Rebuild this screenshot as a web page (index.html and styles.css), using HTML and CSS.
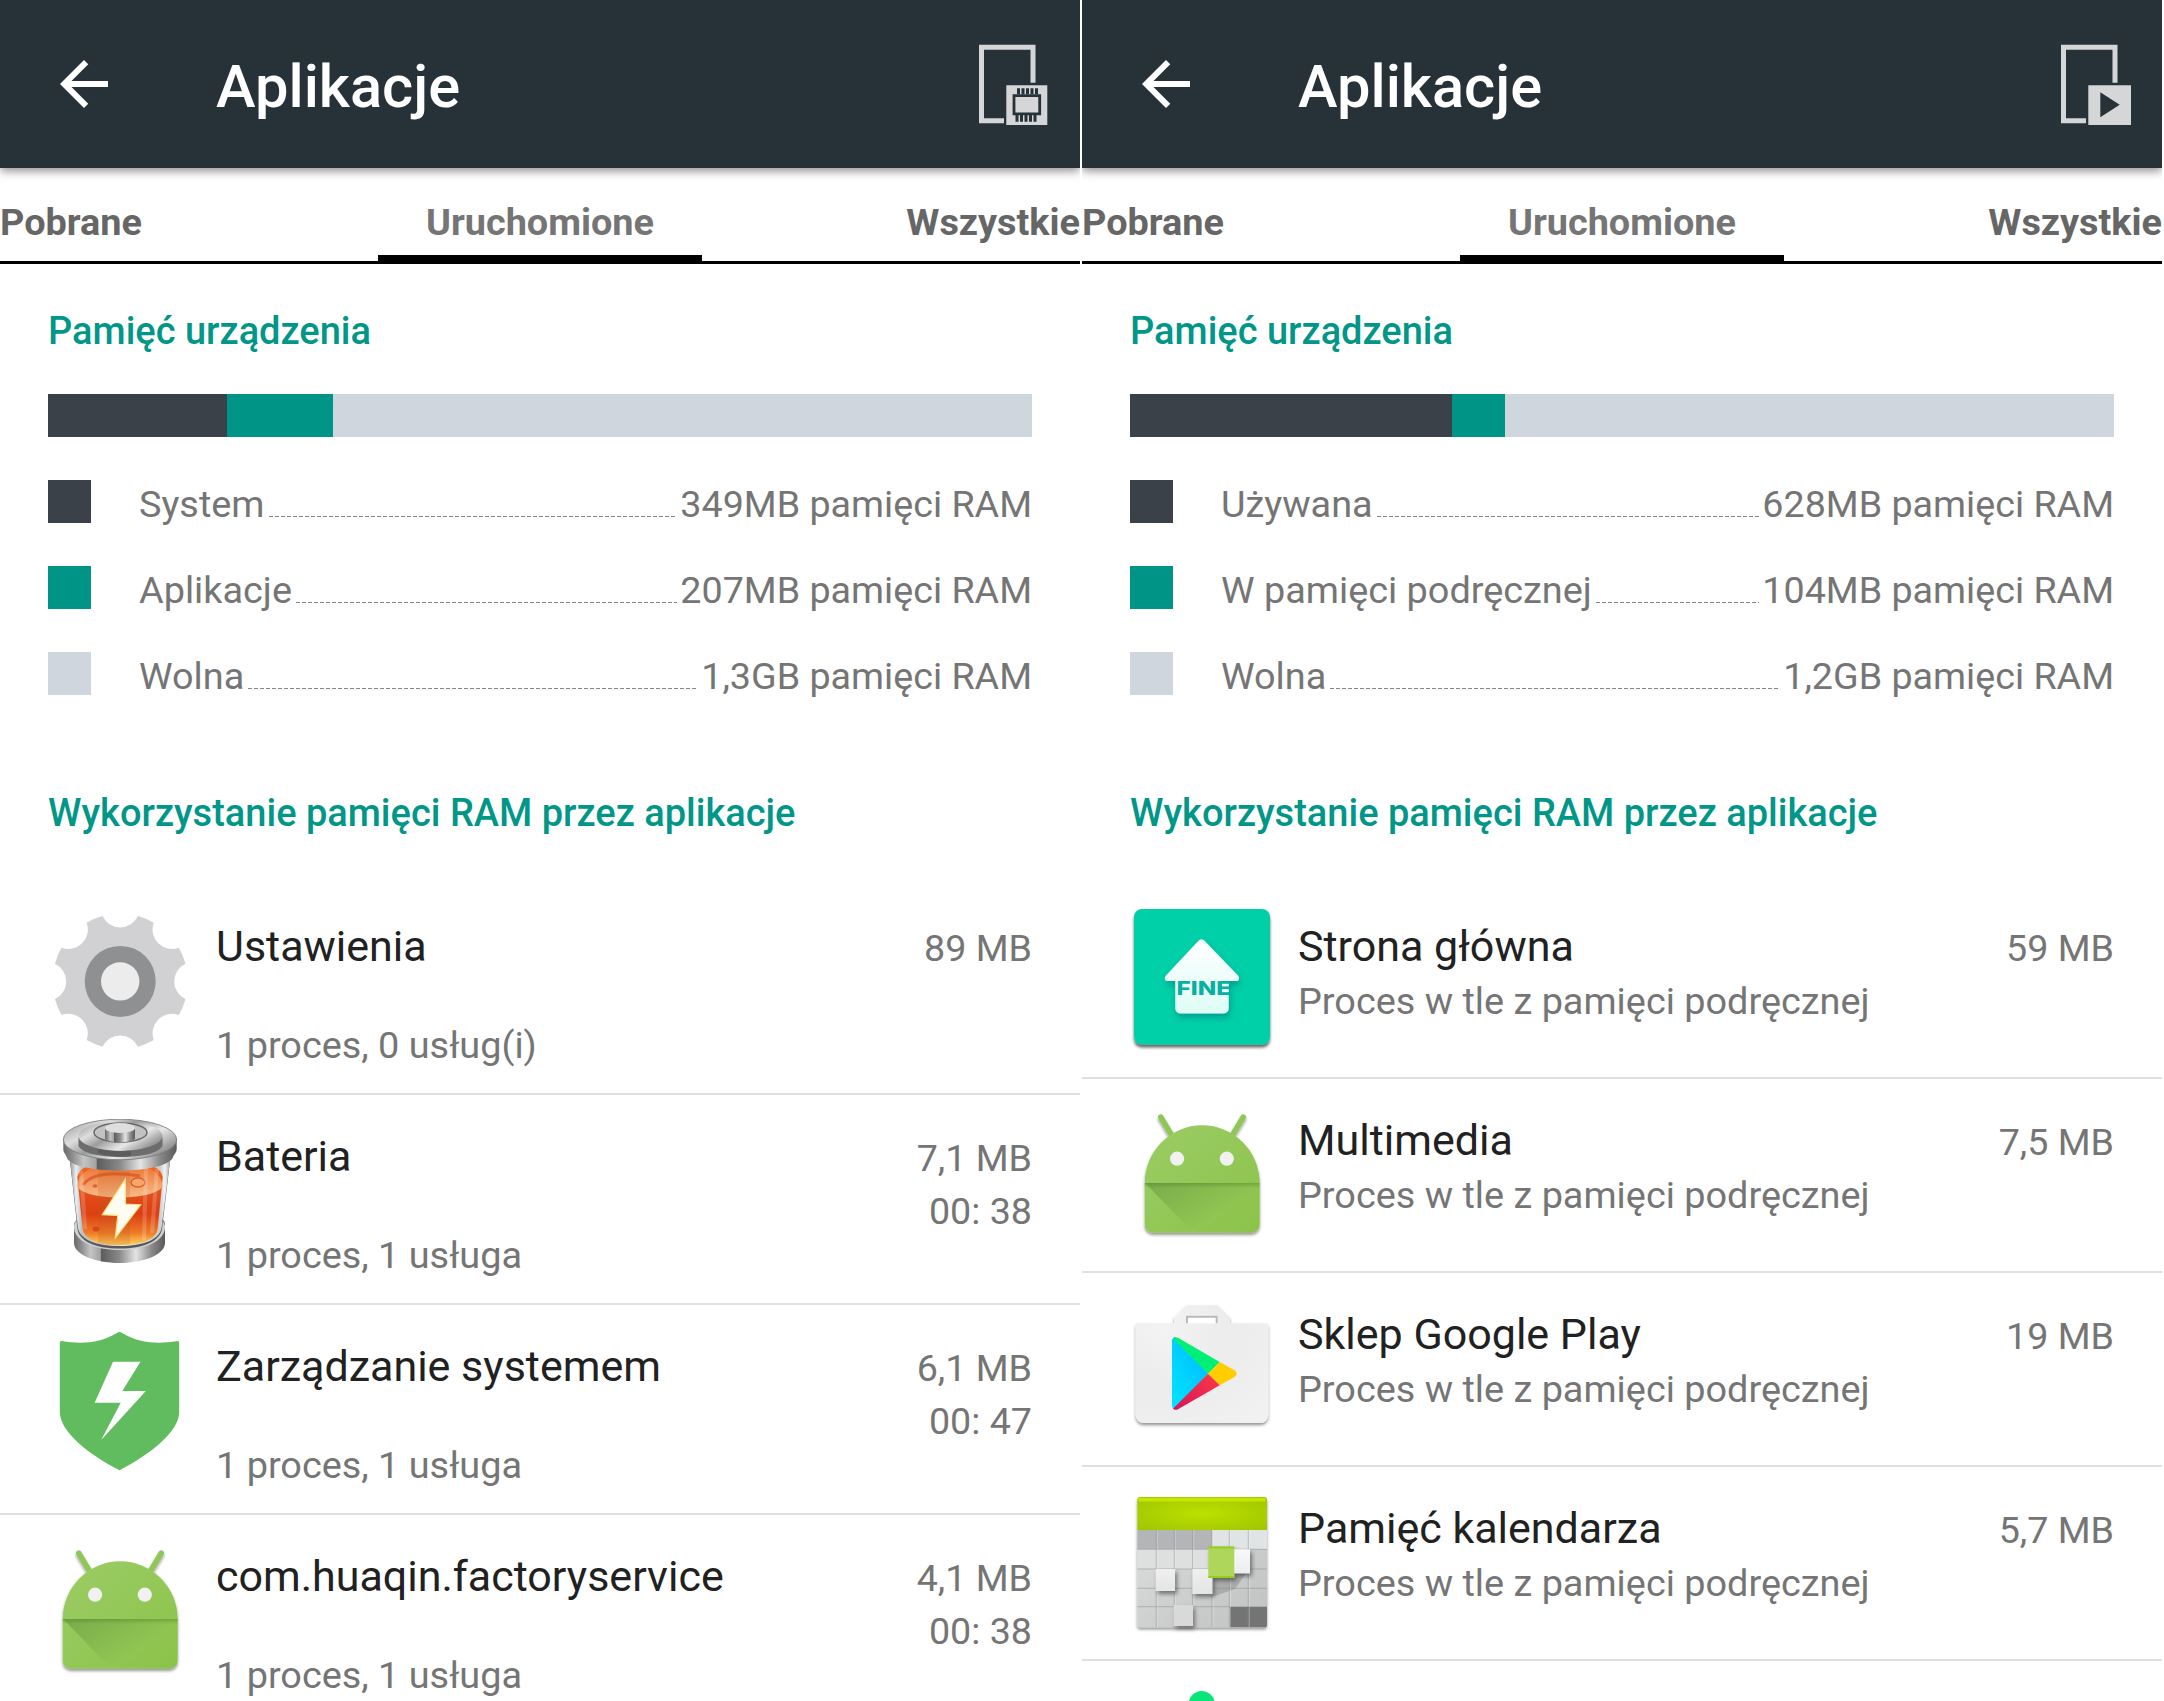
FILE: index.html
```html
<!DOCTYPE html>
<html lang="pl">
<head>
<meta charset="utf-8">
<title>Aplikacje</title>
<link rel="stylesheet" href="styles.css">
</head>
<body>
<svg class="defs" width="0" height="0" aria-hidden="true">
  <defs>
    <linearGradient id="metal" x1="0" x2="1" y1="0" y2="0">
      <stop offset="0" stop-color="#6a6a6a"/><stop offset=".08" stop-color="#8d8d8d"/><stop offset=".18" stop-color="#c4c4c4"/><stop offset=".29" stop-color="#a2a2a2"/>
      <stop offset=".3" stop-color="#5c5c5c"/><stop offset=".5" stop-color="#8a8a8a"/><stop offset=".68" stop-color="#e4e4e4"/><stop offset=".85" stop-color="#8a8a8a"/><stop offset="1" stop-color="#5a5a5a"/>
    </linearGradient>
    <linearGradient id="lid" x1="0" x2="1" y1="0" y2=".6">
      <stop offset="0" stop-color="#8e8e8e"/><stop offset=".3" stop-color="#dedede"/><stop offset=".5" stop-color="#9c9c9c"/><stop offset=".75" stop-color="#e8e8e8"/><stop offset="1" stop-color="#949494"/>
    </linearGradient>
    <linearGradient id="glass" x1="0" x2="1" y1="0" y2="0">
      <stop offset="0" stop-color="#8f9499"/><stop offset=".06" stop-color="#eceff1"/><stop offset=".12" stop-color="#b9bec1"/><stop offset=".5" stop-color="#e8e8e8"/><stop offset=".9" stop-color="#c9cdd0"/><stop offset=".95" stop-color="#f3f4f5"/><stop offset="1" stop-color="#9fa3a6"/>
    </linearGradient>
    <linearGradient id="liquid" x1="0" x2="0" y1="0" y2="1">
      <stop offset="0" stop-color="#f26a1c"/><stop offset=".35" stop-color="#e4501c"/><stop offset=".62" stop-color="#dc3f12"/><stop offset=".85" stop-color="#ee7a26"/><stop offset="1" stop-color="#ffd25c"/>
    </linearGradient>
    <linearGradient id="surface" x1="0" x2="0" y1="0" y2="1">
      <stop offset="0" stop-color="#ee6c2c"/><stop offset="1" stop-color="#f9bd88"/>
    </linearGradient>
    <linearGradient id="droid" x1="0" x2="1" y1="0" y2="1">
      <stop offset="0" stop-color="#9ccc65"/><stop offset="1" stop-color="#8bc34a"/>
    </linearGradient>
    <linearGradient id="fold" x1=".05" x2=".7" y1=".1" y2=".55">
      <stop offset="0" stop-color="#33691e" stop-opacity=".28"/><stop offset="1" stop-color="#33691e" stop-opacity="0"/>
    </linearGradient>
    <linearGradient id="seam" x1="0" x2="0" y1="0" y2="1">
      <stop offset="0" stop-color="#33691e" stop-opacity=".3"/><stop offset="1" stop-color="#33691e" stop-opacity="0"/>
    </linearGradient>
    <linearGradient id="house" x1="0" x2="0" y1="0" y2="1">
      <stop offset="0" stop-color="#ffffff"/><stop offset="1" stop-color="#defdf6"/>
    </linearGradient>
    <linearGradient id="playblue" x1="1" x2="0" y1="0" y2="1">
      <stop offset="0" stop-color="#00b8ff"/><stop offset="1" stop-color="#00e5ff"/>
    </linearGradient>
    <linearGradient id="playred" x1="1" x2="0" y1="0" y2="1">
      <stop offset="0" stop-color="#ff3a44"/><stop offset="1" stop-color="#d4145a"/>
    </linearGradient>
    <radialGradient id="bag" cx=".2" cy=".2" r="1">
      <stop offset="0" stop-color="#f3f3f3"/><stop offset=".5" stop-color="#ececec"/><stop offset="1" stop-color="#f1f1f1"/>
    </radialGradient>
    <radialGradient id="calhead" cx=".5" cy=".5" r=".7">
      <stop offset="0" stop-color="#bbe000"/><stop offset="1" stop-color="#a0c500"/>
    </radialGradient>
    <linearGradient id="calgrid" x1="0" x2="1" y1="0" y2="1">
      <stop offset="0" stop-color="#e2e2e2"/><stop offset=".5" stop-color="#cfd1d1"/><stop offset="1" stop-color="#bfc2c1"/>
    </linearGradient>
    <linearGradient id="calblock" x1="0" x2="0" y1="0" y2="1">
      <stop offset="0" stop-color="#f8f8f8"/><stop offset="1" stop-color="#e4e4e4"/>
    </linearGradient>
    <filter id="drop" x="-20%" y="-20%" width="140%" height="150%"><feDropShadow dx="0" dy="2.2" stdDeviation="1.5" flood-color="#000" flood-opacity=".42"/></filter>
    <filter id="tiledrop" x="-20%" y="-20%" width="140%" height="150%"><feDropShadow dx="0" dy="3" stdDeviation="1.8" flood-color="#000" flood-opacity=".6"/></filter>
    <filter id="softdrop" x="-20%" y="-20%" width="150%" height="150%"><feDropShadow dx="1.5" dy="4" stdDeviation="3.5" flood-color="#006b78" flood-opacity=".5"/></filter>
    <filter id="blockdrop" x="-30%" y="-30%" width="180%" height="190%"><feDropShadow dx="2" dy="3" stdDeviation="2.2" flood-color="#000" flood-opacity=".45"/></filter>
    <symbol id="android" viewBox="0 0 144 144">
      <g filter="url(#drop)">
        <path d="M30.7 14 42.5 33.5M113.3 14 101.5 33.5" stroke="#8fc657" stroke-width="5.4" stroke-linecap="round"/>
        <path d="M14.7 80a57.5 57.7 0 0 1 115 0v41.700a8 8 0 0 1-8 8h-99a8 8 0 0 1-8-8z" fill="url(#droid)"/>
      </g>
      <path d="M15 80h114.500v41.700a8 8 0 0 1-8 8H63.500z" fill="url(#fold)"/>
      <path d="M14.700 80h115v5h-115z" fill="url(#seam)"/>
      <circle cx="47.100" cy="55.700" r="7.100" fill="#f1f1f1"/><circle cx="96.800" cy="55.700" r="7.100" fill="#f1f1f1"/>
    </symbol>
    <symbol id="back" viewBox="0 0 24 24"><path fill="#fff" d="M20 11H7.830l5.590-5.590L12 4l-8 8 8 8 1.410-1.410L7.830 13H20z"/></symbol>
  </defs>
</svg>

<div class="screens">
  <section class="screen">
    <header class="toolbar">
      <svg class="back"><use href="#back"/></svg>
      <h1 class="title">Aplikacje</h1>
      <svg class="action" viewBox="0 0 84 96">
        <path d="M32 84.800H9.500V11.200H61v35.500" fill="none" stroke="#d4d6d8" stroke-width="5"/>
        <path d="M34.300 49.300h41v39.700h-41z" fill="#d4d6d8"/>
        <path d="M42 59.700h25.700v18.200H42z" fill="none" stroke="#273238" stroke-width="2.800"/>
        <path d="M46.500 52.300v6M51 52.300v6M55.500 52.300v6M60 52.300v6M64.500 52.300v6M45 79v6.700M49.500 79v6.700M54 79v6.700M58.500 79v6.700M63 79v6.700" stroke="#273238" stroke-width="3"/>
      </svg>
    </header>
    <nav class="tabs">
      <span class="tab">Pobrane</span>
      <span class="tab tab-active">Uruchomione</span>
      <span class="tab">Wszystkie</span>
    </nav>
    <div class="memory">
      <h2 class="heading">Pamięć urządzenia</h2>
      <div class="bar"><i class="dark" style="width:179px"></i><i class="teal" style="width:106px"></i></div>
      <div class="legend">
        <div class="entry"><i class="swatch dark"></i><span>System</span><i class="leader"></i><span class="amount">349MB pamięci RAM</span></div>
        <div class="entry"><i class="swatch teal"></i><span>Aplikacje</span><i class="leader"></i><span class="amount">207MB pamięci RAM</span></div>
        <div class="entry"><i class="swatch pale"></i><span>Wolna</span><i class="leader"></i><span class="amount">1,3GB pamięci RAM</span></div>
      </div>
      <h2 class="heading">Wykorzystanie pamięci RAM przez aplikacje</h2>
    </div>
    <ul class="apps apps-running">
      <li class="app">
        <svg class="icon" viewBox="0 0 144 144">
          <g transform="translate(72.200 72.400)">
            <path fill="#d1d1d3" d="M65.300-17.700A19.500 19.500 0 0 0 65.300 17.700A67.600 67.600 0 0 1 58.700 33.600A19.500 19.500 0 0 0 33.600 58.700A67.600 67.600 0 0 1 17.700 65.300A19.500 19.500 0 0 0-17.700 65.300A67.600 67.600 0 0 1-33.600 58.700A19.500 19.500 0 0 0-58.700 33.600A67.600 67.600 0 0 1-65.300 17.700A19.500 19.500 0 0 0-65.300-17.700A67.600 67.600 0 0 1-58.700-33.600A19.500 19.500 0 0 0-33.600-58.700A67.600 67.600 0 0 1-17.700-65.300A19.500 19.500 0 0 0 17.700-65.300A67.600 67.600 0 0 1 33.600-58.700A19.500 19.500 0 0 0 58.700-33.600A67.600 67.600 0 0 1 65.300-17.700z"/>
            <circle r="35.500" fill="#8f9092"/><circle r="19.200" fill="#ececec"/>
          </g>
        </svg>
        <div class="text"><b class="name">Ustawienia</b><span class="detail">1 proces, 0 usług(i)</span></div>
        <div class="usage"><span>89 MB</span></div>
      </li>
      <li class="app">
        <svg class="icon" viewBox="0 0 144 144">
          <path d="M26 106c0-4 4-6 6-6h80c3 0 5 2 5 6v18c0 11-20 20-45.500 20S26 135 26 124z" fill="url(#metal)"/>
          <path d="M26 108c0 14 20 23 45.500 23s45.500-9 45.500-23c0-5-4-9-8-9H34c-4 0-8 4-8 9z" fill="#d0d0d0"/>
          <path d="M22 42h100l-8 68c-2 12-18 19.500-42.500 19.500S31 122 29.500 110z" fill="#56585a"/>
          <path d="M22 42h100l-8.500 67c-2 11-17 18-42 18S32 120 30 109z" fill="url(#glass)"/>
          <path d="M29.300 58c3-12 16-14 42.700-14s40 2 42.700 14l-5 52c-2 10-15 16-38 16s-35-6-37-16z" fill="url(#liquid)"/>
          <path d="M29.300 68c10 14 74 14 85.200 0 0-14-15-24-42.500-24S29 54 29.300 68z" fill="url(#surface)"/>
          <path d="M35 66C42 56 60 52 92 57" fill="none" stroke="#d9521c" stroke-width="3" opacity=".7"/>
          <ellipse cx="90" cy="63.500" rx="7" ry="4.500" fill="#f7a66b" stroke="#d4622c" stroke-width="1.500"/>
          <ellipse cx="47" cy="67" rx="2.500" ry="1.800" fill="#d9662f"/><ellipse cx="48" cy="110" rx="3.500" ry="2.500" fill="#d9481c"/>
          <path d="M50 48v76c10 3 22 3 32 1V46z" fill="#b75a1c" opacity=".2"/>
          <path d="M33 52l4 58M98 47l-2 74M109 50l-5 64" stroke="#fff" stroke-width="4" opacity=".18"/>
          <path d="M15.300 20h113.400v10c0 4-3 5-4 9C120 47 98 51.500 72 51.500S22 47 19 39c-1-4-3.700-5-3.700-9z" fill="url(#metal)"/>
          <ellipse cx="72" cy="20.500" rx="56.700" ry="20.300" fill="url(#lid)" stroke="#777" stroke-width=".8"/>
          <path d="M30.500 18v9c4 7 20 11 42 11s38-4 42-11v-9z" fill="#6d6d6d"/>
          <path d="M50 34c12 4 24 4 33 3V22H50z" fill="#505050" opacity=".55"/>
          <ellipse cx="72.500" cy="17" rx="42" ry="15" fill="url(#lid)"/>
          <ellipse cx="72.500" cy="13.500" rx="26.500" ry="9.500" fill="#c2c2c2" stroke="#6a6a6a" stroke-width="1.500"/>
          <path d="M57 9.500v10c3 5 27 5 30 0v-10z" fill="url(#metal)"/>
          <ellipse cx="72" cy="9" rx="15" ry="5" fill="#dedede"/>
          <path d="M77.300 60 54.300 95.700l15.500.8-2.500 22.500 25.400-33.300L77.500 85z" fill="#fffdf2" stroke="#ffe27a" stroke-width="1.200"/>
        </svg>
        <div class="text"><b class="name">Bateria</b><span class="detail">1 proces, 1 usługa</span></div>
        <div class="usage"><span>7,1 MB</span><span>00: 38</span></div>
      </li>
      <li class="app">
        <svg class="icon" viewBox="0 0 144 144">
          <path fill="#60bc5f" d="M71.500 3.100q-1.200 0-3 1.200C52 14 34 15.500 13.500 12q-1.700 0-1.700 1.700V83c0 20 30 43 59.700 58.200C101 126 131.200 103 131.200 83V13.700q0-1.700-1.700-1.700C109 15.500 91 14 74.500 4.300q-1.800-1.200-3-1.200z"/>
          <path fill="#fff" d="M65 32.800h27.500L74.300 62h23.500l-44.600 49 19.500-37.200h-26z"/>
        </svg>
        <div class="text"><b class="name">Zarządzanie systemem</b><span class="detail">1 proces, 1 usługa</span></div>
        <div class="usage"><span>6,1 MB</span><span>00: 47</span></div>
      </li>
      <li class="app">
        <svg class="icon"><use href="#android"/></svg>
        <div class="text"><b class="name">com.huaqin.factoryservice</b><span class="detail">1 proces, 1 usługa</span></div>
        <div class="usage"><span>4,1 MB</span><span>00: 38</span></div>
      </li>
    </ul>
  </section>

  <section class="screen">
    <header class="toolbar">
      <svg class="back"><use href="#back"/></svg>
      <h1 class="title">Aplikacje</h1>
      <svg class="action" viewBox="0 0 84 96">
        <path d="M32 84.800H9.500V11.200H61v35.500" fill="none" stroke="#d4d6d8" stroke-width="5"/>
        <path d="M34.300 49.200H77v39.800H34.300z" fill="#d4d6d8"/>
        <path d="M46.300 56.300v25l19.400-12.500z" fill="#273238"/>
      </svg>
    </header>
    <nav class="tabs">
      <span class="tab">Pobrane</span>
      <span class="tab tab-active">Uruchomione</span>
      <span class="tab">Wszystkie</span>
    </nav>
    <div class="memory">
      <h2 class="heading">Pamięć urządzenia</h2>
      <div class="bar"><i class="dark" style="width:322px"></i><i class="teal" style="width:53px"></i></div>
      <div class="legend">
        <div class="entry"><i class="swatch dark"></i><span>Używana</span><i class="leader"></i><span class="amount">628MB pamięci RAM</span></div>
        <div class="entry"><i class="swatch teal"></i><span>W pamięci podręcznej</span><i class="leader"></i><span class="amount">104MB pamięci RAM</span></div>
        <div class="entry"><i class="swatch pale"></i><span>Wolna</span><i class="leader"></i><span class="amount">1,2GB pamięci RAM</span></div>
      </div>
      <h2 class="heading">Wykorzystanie pamięci RAM przez aplikacje</h2>
    </div>
    <ul class="apps apps-cached">
      <li class="app">
        <svg class="icon" viewBox="0 0 144 144">
          <rect x="4" y="0" width="136" height="135.500" rx="8" fill="#00d0a8" filter="url(#tiledrop)"/>
          <g filter="url(#softdrop)" fill="url(#house)">
            <path d="M68.500 31.800q3-3 6 0L108.500 67q2 5-2.500 5h-7.300v27.500a5 5 0 0 1-5 5H50.300a5 5 0 0 1-5-5V72H38q-5 0-2.500-5z"/>
          </g>
          <text class="fine" x="46.500" y="85.700" textLength="54.500" lengthAdjust="spacingAndGlyphs">FINE</text>
        </svg>
        <div class="text"><b class="name">Strona główna</b><span class="detail">Proces w tle z pamięci podręcznej</span></div>
        <div class="usage"><span>59 MB</span></div>
      </li>
      <li class="app">
        <svg class="icon"><use href="#android"/></svg>
        <div class="text"><b class="name">Multimedia</b><span class="detail">Proces w tle z pamięci podręcznej</span></div>
        <div class="usage"><span>7,5 MB</span></div>
      </li>
      <li class="app">
        <svg class="icon" viewBox="0 0 144 144">
          <g filter="url(#drop)" fill="url(#bag)">
            <path d="M7.700 26.300H44V20.500L56.700 8.300h30.600L100 20.500v5.800h36.300q2 0 2 2V118a8 8 0 0 1-8 8H13.700a8 8 0 0 1-8-8V28.300q0-2 2-2z"/>
          </g>
          <path d="M56 26.300v-6.600q0-1 1-1h29.700q1 0 1 1v6.600z" fill="#fff"/>
          <path d="M57 26.300v-6.600h29.700v6.600" fill="none" stroke="#b9b9b9" stroke-width="2"/>
          <path d="M42 43.500q.5-3.500 3.500-3.500L78 76.700 45.500 112.500q-3-.5-3.500-3.500z" fill="url(#playblue)"/>
          <path d="M43 41.200q2-1.700 5-.4L89.700 65 78 76.700z" fill="#00f076"/>
          <path d="M89.700 65 104.500 73.300q4.500 3.400 0 6.800L89.700 88.300 78 76.700z" fill="#ffcd00"/>
          <path d="M78 76.700 89.700 88.300 48 112.200q-3 1.200-5-.4z" fill="url(#playred)"/>
        </svg>
        <div class="text"><b class="name">Sklep Google Play</b><span class="detail">Proces w tle z pamięci podręcznej</span></div>
        <div class="usage"><span>19 MB</span></div>
      </li>
      <li class="app">
        <svg class="icon" viewBox="0 0 144 144">
          <rect x="7.300" y="6" width="129.700" height="130.300" rx="3" fill="url(#calgrid)" filter="url(#drop)"/>
          <path d="M7.300 39H82v19.300H7.300z" fill="#b4b5b6"/><path d="M82 39h55v19.300H82z" fill="#e0e4e5"/>
          <path d="M7.300 58.300H82V78H7.300z" fill="#dedfdf"/>
          <path d="M7.300 39V9q0-3 3-3H134q3 0 3 3v30z" fill="url(#calhead)"/>
          <path d="M8.500 7h127v3.500h-127z" fill="#c3e800"/>
          <path d="M100 116h37v18q0 2.300-2 2.300h-35z" fill="#737473"/>
          <path d="M82 78h37l-14 20-23 8z" fill="#8c8e8d" opacity=".5" />
          <path d="M26.300 39v97M44.300 39v97M62.700 39v97M82 39v97M99.300 39v97M118.300 39v97M7.300 58.300H137M7.300 78H137M7.300 97.300H137M7.300 115.700H137" stroke="#8b8d8e" stroke-opacity=".5" stroke-width="1"/>
          <path d="M27.300 39v97M45.300 39v97M63.700 39v97M83 39v97M100.300 39v97M119.300 39v97" stroke="#fff" stroke-opacity=".3" stroke-width="1"/>
          <g filter="url(#blockdrop)" fill="url(#calblock)">
            <path d="M25.700 78H45v22H25.700zM62.300 78h20v25h-20zM103 58.300h17v24h-17z"/>
            <path d="M43.700 114H63v21H43.700z" fill="#d9d9d9"/>
            <path d="M78.300 55.500h26v31h-26z" fill="#add65a"/>
          </g>
          <path d="M78.300 55.500h26v2h-26zM78.300 85h26v2h-26z" fill="#93cf1e"/>
        </svg>
        <div class="text"><b class="name">Pamięć kalendarza</b><span class="detail">Proces w tle z pamięci podręcznej</span></div>
        <div class="usage"><span>5,7 MB</span></div>
      </li>
      <li class="app">
        <svg class="icon" viewBox="0 0 144 144"><circle cx="71.700" cy="19" r="13" fill="#08e678"/></svg>
      </li>
    </ul>
  </section>
</div>
</body>
</html>
```
FILE: styles.css
```css
* { box-sizing: border-box; }
body {
  margin: 0;
  height: 1701px;
  overflow: hidden;
  background: #fff;
  font-family: Roboto, "Liberation Sans", sans-serif;
  font-size: 37.85px;
  color: #757575;
}
svg { display: block; flex: none; }
.defs { position: absolute; }
h1, h2, ul { margin: 0; padding: 0; }
ul { list-style: none; }

.screens { display: flex; gap: 2px; height: 1701px; }
.screen { flex: none; width: 1080px; height: 1701px; overflow: hidden; }

.toolbar {
  display: flex;
  align-items: flex-start;
  height: 168px;
  padding: 36px 24px 0 48px;
  background: #273238;
  box-shadow: 0 3px 9px rgba(0, 0, 0, .45);
}
.back { width: 72px; height: 72px; margin-top: 12px; }
.title {
  flex: 1;
  margin: 15px 0 0 96px;
  font-size: 59.6px;
  font-weight: 500;
  line-height: 72px;
  color: #fff;
}
.action { width: 84px; height: 96px; }

.tabs {
  display: grid;
  grid-template-columns: 1fr 324px 1fr;
  height: 96px;
  border-bottom: 3px solid #000;
}
.tab {
  height: 96px;
  padding-top: 12px;
  font-weight: 700;
  line-height: 84px;
  color: #666;
}
.tab:last-child { text-align: right; }
.tab-active {
  text-align: center;
  color: #757575;
  border-bottom: 9px solid #000;
}

.memory { height: 621px; padding: 42px 48px 0; }
.heading {
  font-size: 38px;
  font-weight: 500;
  line-height: 50px;
  color: #009688;
}
.bar {
  display: flex;
  height: 43px;
  margin-top: 38px;
  background: #cfd6dd;
}
.dark { background: #3a4148; }
.teal { background: #009486; }
.pale { background: #cfd6dd; }
.legend {
  display: flex;
  flex-direction: column;
  gap: 43px;
  margin: 43px 0 93px;
}
.entry {
  display: flex;
  height: 43px;
  line-height: 48px;
  white-space: nowrap;
}
.swatch { width: 43px; height: 43px; margin-right: 48px; }
.amount { font-size: 37.65px; }
.leader {
  flex: 1;
  height: 1px;
  margin: 36px 3px 0 4px;
  background: repeating-linear-gradient(90deg, #858585 0 4px, transparent 4px 6px);
}

.app {
  display: flex;
  height: 210px;
  padding: 24px 48px 0;
  border-bottom: 2px solid #e0e0e0;
}
.apps-cached .app { height: 194px; }
.icon { width: 144px; height: 144px; }
.text {
  display: flex;
  flex: 1;
  flex-direction: column;
  gap: 48px;
  padding: 10px 0 0 24px;
}
.apps-cached .text { gap: 4px; }
.name {
  font-size: 43px;
  font-weight: 400;
  line-height: 54px;
  color: #212121;
}
.detail { line-height: 48px; }
.usage {
  display: flex;
  flex-direction: column;
  padding-top: 13px;
  font-size: 37.65px;
  line-height: 53px;
  text-align: right;
}
.fine {
  font-family: Inter, sans-serif;
  font-size: 18.800px;
  font-weight: 800;
  fill: #08b0a0;
}
```
